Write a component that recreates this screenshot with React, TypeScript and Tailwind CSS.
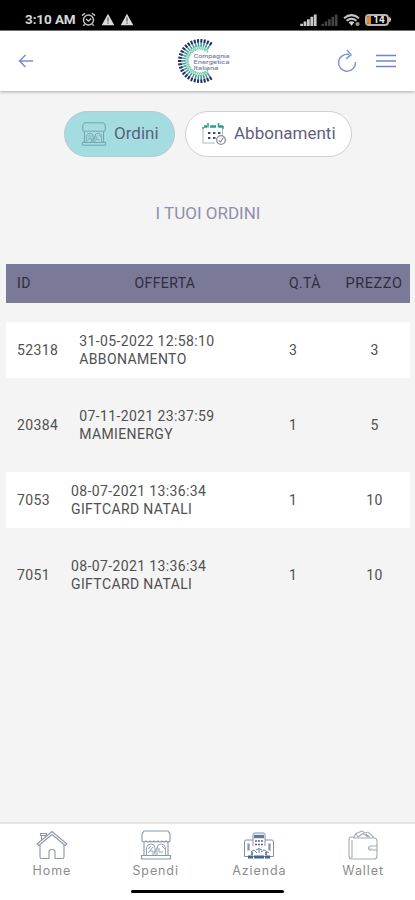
import { type ReactNode } from 'react';

// Define the types for an order row
interface Order {
  id: string;
  date: string;
  name: string;
  qty: string;
  price: string;
}

const orders: Order[] = [
  { id: '52318', date: '31-05-2022 12:58:10', name: 'ABBONAMENTO', qty: '3', price: '3' },
  { id: '20384', date: '07-11-2021 23:37:59', name: 'MAMIENERGY', qty: '1', price: '5' },
  { id: '7053', date: '08-07-2021 13:36:34', name: 'GIFTCARD NATALI', qty: '1', price: '10' },
  { id: '7051', date: '08-07-2021 13:36:34', name: 'GIFTCARD NATALI', qty: '1', price: '10' },
];

// Rays of the logo, open on the right side
const rays = Array.from({ length: 27 }, (_, i) => 58 + i * (244 / 26));

function Logo() {
  return (
    <svg width="56" height="48" viewBox="0 0 56 48" className="shrink-0">
      {rays.map((angle) => (
        <g key={angle} transform={`rotate(${angle} 24 24)`}>
          <path d="M35 21.8Q37 24 42 24Q37 24 35 26.2" fill="none" stroke="#7fcdb4" strokeWidth="0.9" />
          <path d="M38.5 24H43" stroke="#4a9a9b" strokeWidth="1.3" />
          <path d="M42.5 24H46" stroke="#1e2f66" strokeWidth="2" />
        </g>
      ))}
      <g fontFamily="Inter, sans-serif" fontSize="5" fontWeight="500" fill="#68739c">
        <text x="17.5" y="20.6" textLength="36" lengthAdjust="spacingAndGlyphs">Compagnia</text>
        <text x="17.5" y="27" textLength="36" lengthAdjust="spacingAndGlyphs">Energetica</text>
        <text x="17.5" y="33.4" textLength="25" lengthAdjust="spacingAndGlyphs">Italiana</text>
      </g>
    </svg>
  );
}

function StatusBar() {
  return (
    <div className="h-[31px] shrink-0 bg-black border-b border-[#777] flex items-center pt-[9px] pl-[25px] pr-[24px] text-white">
      <span className="text-[13.5px] leading-none font-bold text-[#d8d8d8] w-[51px] whitespace-nowrap tracking-[-0.1px]">3:10 AM</span>
      <svg width="15" height="15" viewBox="0 0 15 15" fill="none" stroke="#c4c4c4" strokeWidth="1.4" className="ml-[5px]">
        <circle cx="7.5" cy="8" r="5" />
        <path d="M5 7l2.4 2L10.2 6.6M1 3.6L4 1.2M14 3.6L11 1.2M3.5 12.2L2.5 13.8M11.5 12.2l1 1.6" />
      </svg>
      {[0, 1].map((i) => (
        <svg key={i} width="14" height="13" viewBox="0 0 14 13" className="ml-[5px]">
          <path d="M7 .7L13.3 12.3H.7z" fill="#dcdcdc" />
          <path d="M7 4.5v4M7 9.6v1.2" stroke="#555" strokeWidth="1.2" />
        </svg>
      ))}
      <svg width="17" height="12" viewBox="0 0 17 12" className="ml-auto" stroke="#c8c8c8" strokeWidth="2.8">
        <path d="M1.6 12V9.8M5 12V7.6M8.4 12V5.2M11.8 12V2.8M15.2 12V.5" />
      </svg>
      <svg width="17" height="12" viewBox="0 0 17 12" className="ml-[4px]" stroke="#444" strokeWidth="2.6">
        <path d="M1.6 12V9.8M5 12V7.6M8.4 12V5.2M11.8 12V2.8M15.2 12V.5" />
      </svg>
      <svg width="18" height="14" viewBox="0 0 18 14" className="ml-[5px]" fill="none" stroke="#c6c6c6" strokeWidth="2">
        <path d="M1 5.2Q8.5 -1 16 5.2M3.6 7.8Q8.5 3.6 13.4 7.8" />
        <path d="M5.6 9.3Q8.5 7 11.4 9.3L8.5 12.8z" fill="#cfcfcf" stroke="none" />
        <circle cx="14.5" cy="11" r="2.1" fill="#999" stroke="none" />
      </svg>
      <div className="ml-[4px] w-[24px] h-[12px] rounded-[4px] border-2 border-[#b4b4b4] flex items-center overflow-hidden">
        <span className="w-[4px] h-[8px] bg-[#e08a2a]" />
        <span className="flex-1 text-center text-[10px] leading-[8px] font-bold text-[#e6e6e6]">14</span>
      </div>
      <span className="w-[2px] h-[5px] rounded-r bg-[#bdbdbd]" />
    </div>
  );
}

// Shop with scalloped awning and two windows
function ShopIcon({ className, color }: { className: string; color: string }) {
  return (
    <svg viewBox="0 0 32 30" className={className} fill="none" stroke={color} strokeWidth="1.1">
      <path d="M4 1h24l2 3v7q-2 2-4 0q-2 2-4 0q-2 2-4 0q-2 2-4 0q-2 2-4 0q-2 2-4 0q-2 2-4 0V4z" />
      <path d="M4 12v13M28 12v13M1.5 25.5h29v3.5h-29z" />
      <path d="M6.5 25V18Q7 14 11 14T15 18V25M17 25V18Q17 14 21 14T25.5 18V25" strokeWidth="0.9" />
      <path d="M8 19l3-3M8 23l5-6M10 21h3v4M19 18v4h4M22 16l3 3M14 23l4-6" strokeWidth="0.9" />
    </svg>
  );
}

function CalendarIcon() {
  return (
    <svg width="25" height="23" viewBox="0 0 25 23" fill="none">
      <path d="M1 6v14h12M20.5 6v6" stroke="#b0b4be" strokeWidth="1" />
      <path d="M2 3.5h3M8 3.5h6M17 3.5h4" stroke="#299d91" strokeWidth="2.4" />
      <path d="M1 6v-2M6 0v4.5M16.5 0v4.5M21 3v3" stroke="#299d91" strokeWidth="1.5" />
      <path d="M6 10h2.4M11 10h2.4M16 10h2.4M6 15h2.4M11 15h2.4" stroke="#3c4778" strokeWidth="2.2" />
      <circle cx="19" cy="17" r="4.3" stroke="#8a8d98" strokeWidth="1.3" />
      <path d="M16.8 17.5l1.7 1.5 3-4.5" stroke="#8a8d98" strokeWidth="1.1" />
    </svg>
  );
}

function HomeIcon() {
  return (
    <svg width="34" height="30" viewBox="0 0 34 30" fill="none" stroke="#8b98ac" strokeWidth="1.1">
      <path d="M2 14L17 1.5 32 14l-1.8 1.5L17 4.5 3.8 15.5z" />
      <path d="M5 15v12q0 1.5 1.5 1.5H14V22q0-2.5 3-2.5t3 2.5v6.5h7.5q1.5 0 1.5-1.5V15" />
      <path d="M6.5 10V5.5M10.5 6.8V5M5.5 3.5h6v2h-6z" />
    </svg>
  );
}

function CompanyIcon() {
  return (
    <svg width="32" height="28" viewBox="0 0 32 28" fill="none" stroke="#8090aa" strokeWidth="1">
      <path d="M10 8V2.5Q10 1 12 1h8q2 0 2 1.5V8M10 8H3Q1.5 8 1.5 10v14.5h29V10q0-2-1.5-2h-7M10 8v6M22 8v6" />
      <path d="M11 4.5h10" stroke="#63779a" strokeWidth="3.4" />
      <path d="M12 9h2M15 9h2M18 9h2M12 12.5h2M15 12.5h2M18 12.5h2" stroke="#526589" strokeWidth="1.6" />
      <path d="M5.5 11.5v7M26.5 11.5v7" stroke="#8292ad" strokeWidth="2.2" />
      <path d="M8 20l3-2 3 3M26 21l-5-3-3 2M13 18q3-3 6 0M16 17v4" stroke="#6d809f" />
      <path d="M5 25h5M11 25h10M22 25h5" stroke="#49658e" strokeWidth="3.2" />
      <path d="M9 20v3M23 20v3" stroke="#49658e" strokeWidth="1.5" />
    </svg>
  );
}

function WalletIcon() {
  return (
    <svg width="31" height="30" viewBox="0 0 31 30" fill="none" stroke="#a2abb8" strokeWidth="1.1">
      <path d="M5 8H26q3 0 3 3v15q0 3-3 3H4q-3 0-3-3V10q0-3 3-3h2M4 10v18" />
      <path d="M29 16h-6q-2.5 0-2.5 2t2.5 2h6M23 17.5v1.2" />
      <path d="M6 7.5L8 3.5 14 1l3 2 3-1 6 5.5M10 7l5-3.5L20 7M18 4l4 3.5M8 4l2 3" />
    </svg>
  );
}

function Tab({ label, children }: { label: string; children: ReactNode }) {
  return (
    <div className="flex-1 flex flex-col items-center">
      <div className="h-[31px] flex items-end">{children}</div>
      <span className="mt-[3px] font-['Inter',sans-serif] text-[12.5px] leading-[15px] tracking-[0.9px] text-[#8c8c8c]">{label}</span>
    </div>
  );
}

export default function App() {
  return (
    <main className="w-full h-[900px] overflow-hidden bg-[#f4f4f4] flex flex-col font-['Roboto',sans-serif]">
      <StatusBar />

      {/* Top navigation */}
      <header className="h-[60px] shrink-0 bg-white shadow-[0_1px_3px_rgba(0,0,0,0.3)] flex items-center pl-[18px] pr-[19px]">
        <svg width="16" height="14" viewBox="0 0 16 14" fill="none" stroke="#7f8ad6" strokeWidth="1.5">
          <path d="M15 7H1.5M7.5 1L1.5 7l6 6" />
        </svg>
        <div className="ml-[142px]">
          <Logo />
        </div>
        <svg width="20" height="24" viewBox="0 0 20 24" fill="none" stroke="#8497d3" strokeWidth="1.5" className="ml-auto">
          <path d="M12 5.5A8.5 8.5 0 1 0 18.5 13" />
          <path d="M10 1l4 4.8-5 4" />
        </svg>
        <svg width="20" height="14" viewBox="0 0 20 14" stroke="#7183cf" strokeWidth="1.7" className="ml-[19px]">
          <path d="M0 1.5h20M0 7h20M0 12.5h20" />
        </svg>
      </header>

      {/* Orders / subscriptions switch */}
      <div className="mt-5 ml-px shrink-0 flex justify-center gap-[10px] text-[17px] text-[#5f5f7c]">
        <button className="w-[111px] h-[46px] rounded-full border border-[#bcc8cc] bg-[#a3dde1] flex items-center pl-[16px]">
          <ShopIcon className="w-[26px] h-[24px]" color="#6e9aa5" />
          <span className="ml-[7px]">Ordini</span>
        </button>
        <button className="w-[167px] h-[46px] rounded-full border border-[#cfcfd2] bg-white flex items-center pl-[16px]">
          <CalendarIcon />
          <span className="ml-[7px]">Abbonamenti</span>
        </button>
      </div>

      <h1 className="mt-[44px] ml-px shrink-0 text-center text-[17px] leading-6 text-[#908fac]">I TUOI ORDINI</h1>

      {/* Orders table */}
      <section className="mt-[39px] ml-[6px] mr-[5px] text-[14px] tracking-[0.38px] text-[#505050]">
        <div className="h-[39px] bg-[#7a7998] flex items-center text-[#2e2e40]">
          <span className="w-[53px] pl-[11px]">ID</span>
          <span className="w-[212px] text-center">OFFERTA</span>
          <span className="w-[67px] pl-[18px]">Q.TÀ</span>
          <span className="flex-1 text-center text-[14.5px] tracking-[0.6px]">PREZZO</span>
        </div>
        <div className="mt-[19px] flex flex-col gap-[19px]">
          {orders.map((order) => (
            <div key={order.id} className="h-[56px] odd:bg-white flex items-center">
              <span className="shrink-0 pl-[11px]">{order.id}</span>
              <div className="ml-[21px] flex-1 leading-[18px] whitespace-nowrap">
                <p>{order.date}</p>
                <p>{order.name}</p>
              </div>
              <span className="w-[51px]">{order.qty}</span>
              <span className="w-[70px] pr-[1px] text-center">{order.price}</span>
            </div>
          ))}
        </div>
      </section>

      {/* Bottom navigation */}
      <footer className="mt-auto h-[78px] shrink-0 bg-white border-t-2 border-[#e4e4e4]">
        <nav className="flex pt-[5px]">
          <Tab label="Home"><HomeIcon /></Tab>
          <Tab label="Spendi"><ShopIcon className="w-[32px] h-[30px]" color="#8b98ac" /></Tab>
          <Tab label="Azienda"><CompanyIcon /></Tab>
          <Tab label="Wallet"><WalletIcon /></Tab>
        </nav>
        <div className="mt-[12px] mx-auto w-[153px] h-[3px] rounded-full bg-black" />
      </footer>
    </main>
  );
}
